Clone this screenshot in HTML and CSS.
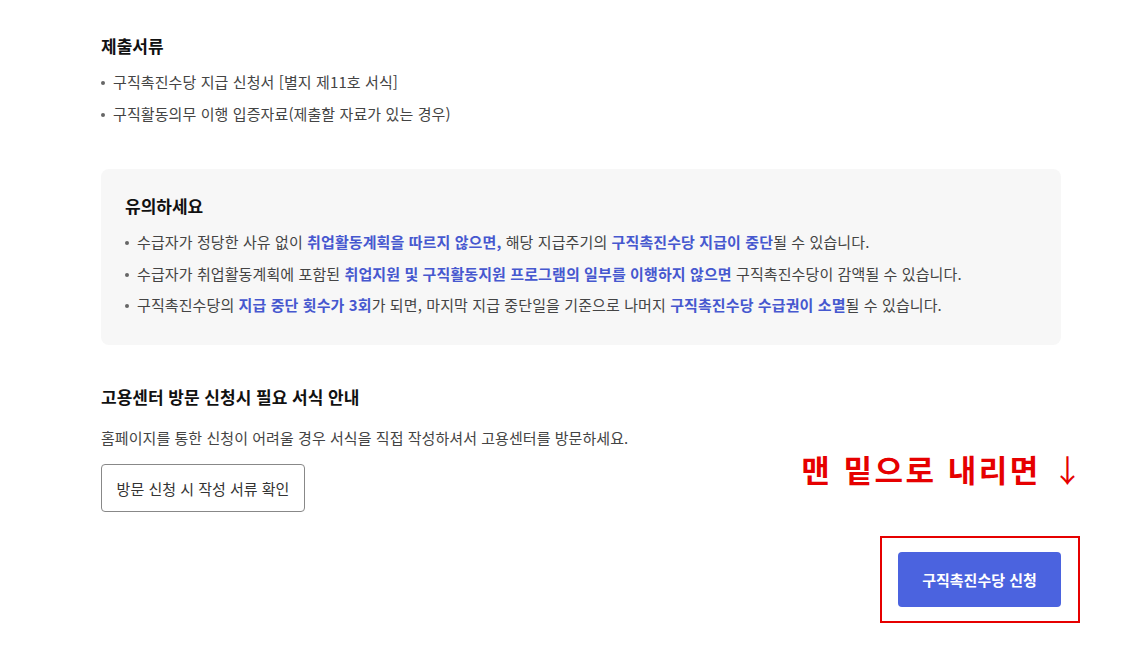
FILE: index.html
```html
<!DOCTYPE html>
<html lang="ko">
<head>
<meta charset="utf-8">
<link rel="stylesheet" href="styles.css">
</head>
<body>
<main class="page">
  <section class="docs">
    <h3 class="title">제출서류</h3>
    <ul class="list">
      <li>구직촉진수당 지급 신청서 [별지 제11호 서식]</li>
      <li>구직활동의무 이행 입증자료(제출할 자료가 있는 경우)</li>
    </ul>
  </section>

  <section class="notice">
    <h3 class="title">유의하세요</h3>
    <ul class="list">
      <li>수급자가 정당한 사유 없이 <b>취업활동계획을 따르지 않으면,</b> 해당 지급주기의 <b>구직촉진수당 지급이 중단</b>될 수 있습니다.</li>
      <li>수급자가 취업활동계획에 포함된 <b>취업지원 및 구직활동지원 프로그램의 일부를 이행하지 않으면</b> 구직촉진수당이 감액될 수 있습니다.</li>
      <li>구직촉진수당의 <b>지급 중단 횟수가 3회</b>가 되면, 마지막 지급 중단일을 기준으로 나머지 <b>구직촉진수당 수급권이 소멸</b>될 수 있습니다.</li>
    </ul>
  </section>

  <section class="visit">
    <h3 class="title">고용센터 방문 신청시 필요 서식 안내</h3>
    <p class="desc">홈페이지를 통한 신청이 어려울 경우 서식을 직접 작성하셔서 고용센터를 방문하세요.</p>
    <button class="btn-outline" type="button">방문 신청 시 작성 서류 확인</button>
  </section>

  <div class="actions">
    <button class="btn-primary" type="button">구직촉진수당 신청</button>
    <span class="mark-box"></span>
    <span class="mark-text">맨 밑으로 내리면 <span class="arrow">↓</span></span>
  </div>
</main>
</body>
</html>
```

FILE: styles.css
```css
* { box-sizing: border-box; }
html, body { margin: 0; padding: 0; background: #fff; }
body {
  font-family: "Noto Sans CJK KR", "Noto Sans", sans-serif;
  color: #333;
  width: 1140px;
  height: 661px;
  overflow: hidden;
}
.page {
  width: 960px;
  margin-left: 101px;
  padding-top: 33px;
  position: relative;
}
.title {
  margin: 0;
  font-size: 17px;
  font-weight: 700;
  color: #111;
  line-height: 26px;
  letter-spacing: 0;
}
.list {
  list-style: none;
  margin: 7px 0 0;
  padding: 0;
}
.list li {
  position: relative;
  padding-left: 12px;
  font-size: 15px;
  line-height: 32px;
  color: #444;
  letter-spacing: 0.1px;
}
.list li::before {
  content: "";
  position: absolute;
  left: 0;
  top: 15px;
  width: 4px;
  height: 4px;
  border-radius: 50%;
  background: #666;
}
.list b { color: #4658cf; font-weight: 700; }

.notice {
  margin-top: 39px;
  background: #f7f7f7;
  border-radius: 8px;
  padding: 24px 24px 20px 24px;
  height: 176px;
}
.notice .list { margin-top: 7px; }
.notice .list li { line-height: 31.5px; }

.visit { margin-top: 39px; }
.desc {
  margin: 16px 0 0;
  font-size: 15px;
  line-height: 24px;
  color: #444;
  letter-spacing: 0.05px;
}
.btn-outline {
  margin-top: 14px;
  width: 204px;
  height: 48px;
  border: 1px solid #888;
  border-radius: 4px;
  background: #fff;
  font-family: inherit;
  font-size: 15px;
  color: #333;
  letter-spacing: 0;
}

.actions {
  position: relative;
  display: flex;
  justify-content: flex-end;
  margin-top: 40px;
}
.btn-primary {
  width: 163px;
  height: 55px;
  border: 0;
  border-radius: 4px;
  background: #4b63df;
  color: #fff;
  font-family: inherit;
  font-size: 15px;
  font-weight: 700;
  letter-spacing: 0;
}
.mark-box {
  position: absolute;
  right: -19px;
  top: -16px;
  width: 200px;
  height: 87px;
  border: 2px solid #e60000;
}
.mark-text {
  position: absolute;
  right: -22px;
  top: -103px;
  font-size: 31px;
  font-weight: 700;
  color: #e60000;
  letter-spacing: 2.5px;
  line-height: 40px;
  white-space: nowrap;
}
.arrow {
  font-weight: 400;
  letter-spacing: 0;
}
```
